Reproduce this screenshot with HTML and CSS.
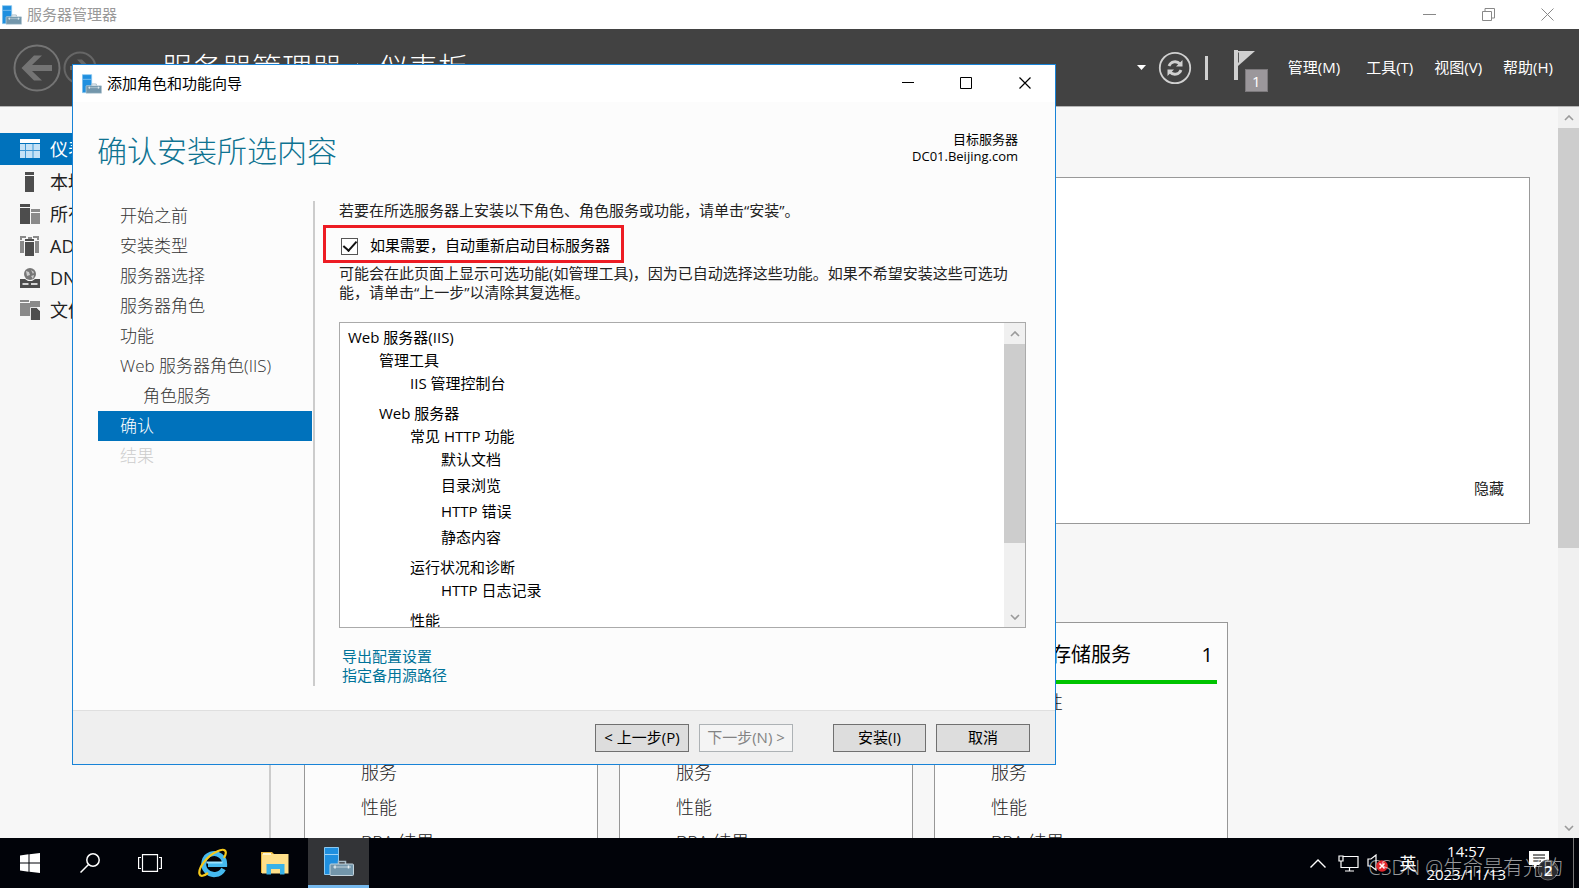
FILE: index.html
```html
<!DOCTYPE html>
<html lang="zh-CN">
<head>
<meta charset="utf-8">
<title>服务器管理器</title>
<link rel="stylesheet" href="styles.css">
</head>
<body>
<svg class="defs" aria-hidden="true">
  <symbol id="server-manager" viewBox="0 0 30 29">
    <path d="M0.5 .5h14v27h-14z" fill="#1f8fdf" stroke="#8cc8f0"/>
    <path d="M1 7.5h13" stroke="#9fd2f5"/>
    <path d="M14.5 17v-2.5h7V17" fill="none" stroke="#a9bcc8" stroke-width="1.5"/>
    <rect x="6" y="17" width="23.500" height="11.500" rx="1" fill="#7396ab" stroke="#c3d3dc"/>
    <path d="M9 20h18" stroke="#c3d3dc"/><path d="M11 18.500v3M24.500 18.500v3" stroke="#e6eef2" stroke-width="1.500"/>
  </symbol>
  <symbol id="chev-up" viewBox="0 0 10 6"><path d="M1 5l4-4 4 4" fill="none" stroke="#9a9a9a" stroke-width="1.600"/></symbol>
  <symbol id="chev-down" viewBox="0 0 10 6"><path d="M1 1l4 4 4-4" fill="none" stroke="#9a9a9a" stroke-width="1.600"/></symbol>
</svg>

<div class="app">
  <div class="titlebar">
    <svg class="app-icon"><use href="#server-manager"/></svg>
    <span class="caption">服务器管理器</span>
    <div class="win-buttons">
      <button aria-label="最小化"><svg width="13" height="13"><path d="M0 6.500h13" stroke="#888"/></svg></button>
      <button aria-label="还原"><svg width="13" height="13" fill="none" stroke="#888"><path d="M.5 3.500h9v9h-9zM3 3.500v-3h9.500v9.500H10"/></svg></button>
      <button aria-label="关闭"><svg width="13" height="13"><path d="M.5.5l12 12M12.500.5l-12 12" stroke="#888"/></svg></button>
    </div>
  </div>

  <header class="header">
    <button class="nav-back" aria-label="后退"><svg width="48" height="48" viewBox="0 0 48 48"><circle cx="24" cy="24" r="22.500" fill="none" stroke="#747474" stroke-width="2"/><path d="M39 21v6H19l10 9.500h-8L8.500 24 21 11.500h8L19 21z" fill="#747474"/></svg></button>
    <button class="nav-forward" aria-label="前进"><svg width="34" height="34" viewBox="0 0 34 34"><circle cx="17" cy="17" r="15.500" fill="none" stroke="#666" stroke-width="2"/><path d="M7 15v4h13l-6 6.500h5L27.500 17 19 8.500h-5l6 6.500z" fill="#666"/></svg></button>
    <h1 class="breadcrumb"><span>服务器管理器</span><svg width="8" height="10"><path d="M1 0l6 5-6 5z" fill="#ddd"/></svg><span>仪表板</span></h1>
    <div class="tools">
      <svg class="caret" width="9" height="5"><path d="M0 0h9L4.500 5z" fill="#fff"/></svg>
      <button class="refresh" aria-label="刷新"><svg width="34" height="34" viewBox="0 0 34 34" fill="none" stroke="#d0d0d0"><circle cx="17" cy="17" r="15.200" stroke-width="1.800"/><path d="M11 15a6.500 6.500 0 0 1 11-2" stroke-width="2.800"/><path d="M23 19a6.500 6.500 0 0 1-11 2" stroke-width="2.800"/><path d="M24.500 9v6.500H18zM9.500 25v-6.500H16z" fill="#d0d0d0" stroke="none"/></svg></button>
      <span class="divider"></span>
      <button class="flag" aria-label="通知"><svg width="36" height="44" viewBox="0 0 36 44"><path d="M1 1h4v30H1z" fill="#d0d0d0"/><path d="M1 2h21L5 17z" fill="#d0d0d0"/><path d="M5.500 3.500v10" stroke="#555"/></svg><span class="badge">1</span></button>
      <nav class="menu">
        <button>管理(M)</button><button>工具(T)</button><button>视图(V)</button><button>帮助(H)</button>
      </nav>
    </div>
  </header>

  <div class="content">
    <nav class="sidebar">
      <a class="side-item active" href="#"><svg width="20" height="20"><path d="M0 0h20v4H0z" fill="#fff"/><path d="M0 5h20v14H0z" fill="#c5e2f6"/><path d="M5.500 5v14M13 5v14M0 11.500h20" stroke="#3f97d3"/></svg>仪表板</a>
      <a class="side-item" href="#"><svg width="20" height="20" fill="#4d4d4d"><path d="M5 0h9v3H5zM5 4h9v16H5z"/></svg>本地服务器</a>
      <a class="side-item" href="#"><svg width="20" height="20" fill="#4d4d4d"><path d="M0 0h10v3H0zM0 4h10v16H0z"/><path d="M11 5h9v3h-9zM11 9h9v11h-9z" fill="#8a8a8a"/></svg>所有服务器</a>
      <a class="side-item" href="#"><svg width="20" height="20" fill="#8a8a8a"><path d="M0 0h6v2H2v2H0zM0 5h4v12H0zM13 0h6v4h-2V2h-4zM15 5h4v12h-4zM8 1h4v2H8z"/><path d="M5 3h9v2H5zM5 6h9v14H5z" fill="#4d4d4d"/></svg>AD DS</a>
      <a class="side-item" href="#"><svg width="20" height="20"><circle cx="10" cy="6" r="6" fill="#777"/><path d="M6 3l3 1 1 3-3 1zM11 2l3 2-1 2zM11 8l3-1-1 4z" fill="#ccc"/><path d="M0 11h5l3 2h4l3-2h5v9H0z" fill="#4d4d4d"/><path d="M2.500 16h6M11 16h6.500" stroke="#d5d5d5" stroke-width="2"/></svg>DNS</a>
      <a class="side-item" href="#"><svg width="20" height="20" fill="#8a8a8a"><path d="M0 0h9v2H0zM0 3h10v13H0zM10 1h10v6h-9v3h-1z"/><path d="M11 8h6l3 3v9h-9z" fill="#4d4d4d"/><path d="M10.500 20V7.500H17l2.500 3" fill="none" stroke="#e5e5e5"/></svg>文件和存储服务</a>
    </nav>
    <main class="main">
      <section class="welcome"><button>隐藏</button></section>
      <div class="tiles">
        <section class="tile"><h2><span>AD DS</span><span>1</span></h2><ul><li>可管理性</li><li>事件</li><li>服务</li><li>性能</li><li>BPA 结果</li></ul></section>
        <section class="tile"><h2><span>DNS</span><span>1</span></h2><ul><li>可管理性</li><li>事件</li><li>服务</li><li>性能</li><li>BPA 结果</li></ul></section>
        <section class="tile"><h2><span>文件和存储服务</span><span>1</span></h2><ul><li>可管理性</li><li>事件</li><li>服务</li><li>性能</li><li>BPA 结果</li></ul></section>
      </div>
    </main>
    <div class="scrollbar page-scroll"><svg><use href="#chev-up"/></svg><div class="track"><div class="thumb"></div></div><svg><use href="#chev-down"/></svg></div>
  </div>

  <footer class="taskbar">
    <button aria-label="开始"><svg width="20" height="20" fill="#fff"><path d="M0 2.500L8.500 1.300V9.500H0zM9.500 1.200L20 0v9.500H9.500zM0 10.500h8.500v8.200L0 17.500zM9.500 10.500H20V20L9.500 18.800z"/></svg></button>
    <button aria-label="搜索"><svg width="20" height="20" fill="none" stroke="#fff" stroke-width="1.500"><circle cx="13" cy="7" r="6.200"/><path d="M8.500 11.500L.5 19.500"/></svg></button>
    <button aria-label="任务视图"><svg width="24" height="18" fill="none" stroke="#fff" stroke-width="1.200"><path d="M4.500.6h15v16.800h-15zM3 3.500H.6v11H3M21 3.500h2.400v11H21"/></svg></button>
    <button class="pinned" aria-label="Internet Explorer"><svg width="30" height="30" viewBox="0 0 30 30" fill="none"><path d="M25.500 21a10.500 10.500 0 1 1 1.200-4.500H10" stroke="#45b9ee" stroke-width="5"/><path d="M8.500 14.500h16" stroke="#9ce3ff" stroke-width="2"/><path d="M26 10C30 3 27-.5 19 3.500 9 8 0 20 1.500 26c.8 3 4.500 2 8.500-1" stroke="#f5c91c" stroke-width="2.200"/></svg></button>
    <button class="pinned" aria-label="文件资源管理器"><svg width="28" height="25" viewBox="0 0 28 25"><path d="M0 1h11l2 2h14v19H0z" fill="#e8b73c"/><path d="M1 3h26.500v19.500H1z" fill="#ffe08a"/><path d="M2 3h8" stroke="#fff6d0" stroke-width="2"/><path d="M5.500 23.500V13h18v10.500h-4.500V18h-9v5.500z" fill="#38b2e8"/></svg></button>
    <button class="running" aria-label="服务器管理器"><svg width="30" height="29"><use href="#server-manager"/></svg></button>
    <div class="tray">
      <svg width="16" height="9" fill="none" stroke="#fff" stroke-width="1.400"><path d="M.5 8.500L8 1l7.500 7.500"/></svg>
      <svg width="21" height="17" fill="none" stroke="#fff" stroke-width="1.200"><path d="M5 1.500h15v11H3V7M11.500 13v3M7 16h9M1 1h4v5H1zM3 6v6"/></svg>
      <svg width="22" height="18"><path d="M1 5h3l5-4v15l-5-4H1z" fill="none" stroke="#fff" stroke-width="1.200"/><circle cx="15" cy="12" r="5.800" fill="#e2262c"/><path d="M12.500 9.500l5 5M17.500 9.500l-5 5" stroke="#fff" stroke-width="1.500"/></svg>
      <span class="ime">英</span>
      <time class="clock"><span>14:57</span><span>2023/11/13</span></time>
      <button class="notices" aria-label="操作中心"><svg width="30" height="32" viewBox="0 0 30 32"><path d="M0 2h20v14H8l-3 4v-4H0z" fill="#fff"/><path d="M4 6h12M4 9h12M4 12h8" stroke="#000"/><circle cx="19" cy="21" r="10" fill="#2b2c30" stroke="#666"/></svg><span class="notice-count">2</span></button>
      <span class="show-desktop"></span>
    </div>
  </footer>
</div>

<section class="dialog" role="dialog" aria-labelledby="dlg-caption">
  <div class="dialog-title">
    <svg class="app-icon"><use href="#server-manager"/></svg>
    <span id="dlg-caption">添加角色和功能向导</span>
    <div class="win-buttons">
      <button aria-label="最小化"><svg width="13" height="13"><path d="M1 5.500h12" stroke="#000"/></svg></button>
      <button aria-label="最大化"><svg width="13" height="13"><path d="M.5.5h11v11H.5z" fill="none" stroke="#000"/></svg></button>
      <button aria-label="关闭"><svg width="13" height="13"><path d="M.5.5l11 11M11.500.5l-11 11" stroke="#000" stroke-width="1.200"/></svg></button>
    </div>
  </div>
  <div class="dialog-head">
    <h2>确认安装所选内容</h2>
    <p class="target">目标服务器<br>DC01.Beijing.com</p>
  </div>
  <div class="dialog-body">
    <nav class="steps">
      <a href="#">开始之前</a>
      <a href="#">安装类型</a>
      <a href="#">服务器选择</a>
      <a href="#">服务器角色</a>
      <a href="#">功能</a>
      <a href="#">Web 服务器角色(IIS)</a>
      <a href="#" class="sub">角色服务</a>
      <a href="#" class="current">确认</a>
      <a class="disabled">结果</a>
    </nav>
    <div class="page">
      <p>若要在所选服务器上安装以下角色、角色服务或功能，请单击“安装”。</p>
      <div class="restart"><input type="checkbox" id="restart" checked><label for="restart">如果需要，自动重新启动目标服务器</label></div>
      <p>可能会在此页面上显示可选功能(如管理工具)，因为已自动选择这些功能。如果不希望安装这些可选功能，请单击“上一步”以清除其复选框。</p>
      <div class="list">
        <ul class="tree">
          <li><span>Web 服务器(IIS)</span>
            <ul>
              <li><span>管理工具</span><ul><li class="leaf">IIS 管理控制台</li></ul></li>
              <li><span>Web 服务器</span>
                <ul>
                  <li><span>常见 HTTP 功能</span><ul><li class="leaf">默认文档</li><li class="leaf">目录浏览</li><li class="leaf">HTTP 错误</li><li class="leaf">静态内容</li></ul></li>
                  <li><span>运行状况和诊断</span><ul><li class="leaf">HTTP 日志记录</li></ul></li>
                  <li><span>性能</span></li>
                </ul>
              </li>
            </ul>
          </li>
        </ul>
        <div class="scrollbar list-scroll"><svg><use href="#chev-up"/></svg><div class="track"><div class="thumb"></div></div><svg><use href="#chev-down"/></svg></div>
      </div>
      <div class="links"><a href="#">导出配置设置</a><a href="#">指定备用源路径</a></div>
    </div>
  </div>
  <div class="dialog-foot">
    <button>&lt; 上一步(P)</button>
    <button disabled>下一步(N) &gt;</button>
    <button class="install">安装(I)</button>
    <button>取消</button>
  </div>
</section>
<div class="watermark">CSDN @生命是有光的</div>
</body>
</html>
```
FILE: styles.css
```css
* { box-sizing: border-box; }
body {
  margin: 0;
  height: 100vh;
  overflow: hidden;
  position: relative;
  font: 15px/19px "Open Sans", "Noto Sans CJK SC", sans-serif;
  color: #222;
  background: #f7f7f7;
}
button { font: inherit; color: inherit; background: none; border: 0; padding: 0; }
a { color: inherit; text-decoration: none; }
h1, h2, p, ul { margin: 0; padding: 0; font-weight: 300; }
ul { list-style: none; }
svg { flex: none; display: block; }
.defs { position: absolute; width: 0; height: 0; }

.app { display: flex; flex-direction: column; height: 100%; }
.titlebar { display: flex; align-items: center; height: 29px; flex: none; background: #fff; padding-left: 2px; color: #999; }
.app-icon { width: 20px; height: 20px; }
.caption { margin-left: 5px; }
.win-buttons { display: flex; margin-left: auto; }
.win-buttons button { width: 59px; height: 28px; display: flex; align-items: center; justify-content: center; }
.titlebar .win-buttons { padding-right: 2px; }

.header { display: flex; align-items: center; height: 78px; flex: none; background: #424242; border-bottom: 1px solid #b5b5b5; padding: 0 26px 0 13px; color: #fff; }
.nav-forward { margin-left: 2px; }
.breadcrumb { display: flex; align-items: center; gap: 14px; margin-left: 65px; font-size: 30px; line-height: 40px; }
.tools { display: flex; align-items: center; margin-left: auto; }
.refresh { margin-left: 12px; }
.divider { width: 3px; height: 24px; margin: 0 25px 0 13px; background: #d0d0d0; }
.flag { position: relative; margin-top: 6px; }
.badge { position: absolute; left: 12px; top: 20px; width: 23px; height: 23px; line-height: 22px; background: #9b979b; border: 1px solid #7c797c; text-align: center; }
.menu { display: flex; gap: 21px; margin-left: 19px; }
.menu button:first-child { margin-right: 5px; }

.content { display: flex; flex: 1; min-height: 0; overflow: hidden; }
.sidebar { width: 271px; flex: none; padding-top: 26px; border-right: 2px solid #ccc; }
.side-item { display: flex; align-items: center; gap: 10px; height: 32px; padding-left: 20px; font-size: 18px; }
.side-item.active { background: #0072bc; color: #fff; margin-bottom: 1px; }
.main { flex: 1; padding: 70px 28px 0 33px; overflow: hidden; }
.welcome { display: flex; align-items: flex-end; justify-content: flex-end; height: 347px; padding: 25px; background: #fff; border: 1px solid #999; }
.tiles { display: flex; gap: 21px; margin-top: 98px; }
.tile { flex: none; width: 294px; height: 380px; padding: 12px 10px; border: 1px solid #979797; background: #fcfcfc; }
.tile h2 { display: flex; justify-content: space-between; padding: 6px 4px 12px 46px; border-bottom: 4px solid #00c400; font-size: 20px; line-height: 27px; font-weight: 400; color: #000; }
.tile ul { padding-left: 46px; }
.tile li { font-size: 18px; line-height: 35px; }
.tile li:first-child { margin-top: 1px; }

.scrollbar { display: flex; flex-direction: column; align-items: center; justify-content: space-between; width: 21px; flex: none; background: #f0f0f0; }
.scrollbar > svg { width: 10px; height: 6px; margin: 8px 0 7px; }
.track { flex: 1; width: 100%; }
.thumb { background: #cdcdcd; }
.page-scroll .thumb { height: 61%; }
.list-scroll .thumb { height: 76%; }

.taskbar { display: flex; height: 50px; flex: none; background: #010309; color: #fff; }
.taskbar > button { width: 60px; display: flex; align-items: center; justify-content: center; }
.taskbar > .pinned { width: 62px; padding-left: 4px; }
.taskbar > .running { width: 61px; margin-left: 4px; background: #333437; border-bottom: 3px solid #76b9ed; }
.tray { display: flex; align-items: center; margin-left: auto; }
.tray > svg { margin-right: 12px; }
.tray > svg:nth-of-type(2) { margin-right: 8px; }
.tray > svg:nth-of-type(3) { margin-right: 10px; }
.ime { font-size: 17px; }
.clock { display: flex; flex-direction: column; align-items: center; margin-left: 10px; line-height: 23px; }
.notices { position: relative; margin: 4px 14px 0 23px; }
.notice-count { position: absolute; left: 15px; top: 12px; font-weight: 600; }
.show-desktop { align-self: stretch; width: 6px; border-left: 1px solid #777; }
.watermark { position: absolute; right: 16px; bottom: 6px; font-size: 20px; line-height: 28px; font-weight: 300; color: rgba(255, 255, 255, .6); }

.dialog { position: absolute; left: 72px; right: 523px; top: 64px; bottom: 123px; display: flex; flex-direction: column; border: 1px solid #1883d7; background: #fcfcfc; overflow: hidden; }
.dialog-title { display: flex; align-items: center; height: 37px; flex: none; padding-left: 9px; background: #fff; color: #000; }
#dlg-caption { margin-left: 5px; }
.dialog-head { display: flex; justify-content: space-between; height: 99px; flex: none; padding: 29px 37px 0 24px; }
.dialog-head h2 { font-size: 30px; line-height: 40px; color: #0f7391; }
.target { font-size: 13px; line-height: 17px; text-align: right; color: #000; font-weight: 400; }
.dialog-body { display: flex; flex: 1; min-height: 0; padding: 0 29px 24px 25px; }
.steps { width: 217px; flex: none; border-right: 2px solid #ccc; font-size: 17px; font-weight: 300; color: #333; }
.steps a { display: block; width: 214px; height: 30px; padding-left: 22px; line-height: 30px; }
.steps .sub { padding-left: 45px; }
.steps .current { background: #0072bc; color: #fff; }
.steps .disabled { color: #ccc; }
.page { flex: 1; min-width: 0; display: flex; flex-direction: column; padding-left: 24px; }
.page p { font-weight: 400; }
.restart { display: flex; align-items: center; align-self: flex-start; gap: 12px; height: 38px; margin: 5px 0 1px -16px; padding: 2px 11px 0 15px; border: 3px solid #ed1c24; color: #000; }
.restart input { appearance: none; width: 17px; height: 17px; margin: 2px 0 0; border: 1px solid #555; background: #fff; display: grid; place-items: center; }
.restart input:checked::before { content: ""; width: 6px; height: 11px; margin-top: -3px; border: solid #111; border-width: 0 2px 2px 0; transform: rotate(42deg); }
.list { display: flex; height: 306px; margin-top: 20px; border: 1px solid #aaa; background: #fff; color: #000; overflow: hidden; }
.tree { flex: 1; padding: 3px 0 0 8px; line-height: 23px; font-weight: 400; }
.tree ul { padding-left: 31px; font-weight: 400; }
.tree span { display: block; }
.tree li { padding-bottom: 4px; }
.tree .leaf { padding-bottom: 3px; }
.links { display: flex; flex-direction: column; align-items: flex-start; margin: 19px 0 0 3px; color: #007399; }
.dialog-foot { display: flex; justify-content: flex-end; align-items: center; gap: 10px; height: 54px; flex: none; padding: 0 25px; background: #efefef; border-top: 1px solid #dfdfdf; }
.dialog-foot button { width: 94px; height: 28px; border: 1px solid #707070; background: #ddd; color: #000; white-space: nowrap; }
.dialog-foot button:disabled { border-color: #adb2b5; background: #f4f4f4; color: #838383; }
.dialog-foot .install { width: 93px; margin-left: 30px; }
```
